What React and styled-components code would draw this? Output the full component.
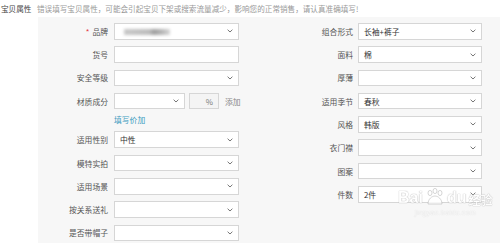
import React from "react";
import styled, { createGlobalStyle } from "styled-components";

const Global = createGlobalStyle`
  html, body {
    margin: 0;
    padding: 0;
    background: #fff;
  }
  body {
    font-family: "Noto Sans CJK SC", "Noto Sans", sans-serif;
    color: #555;
  }
`;

const Page = styled.div`
  position: relative;
  width: 500px;
  height: 243px;
  overflow: hidden;
`;

const Header = styled.div`
  display: flex;
  align-items: center;
  height: 17px;
  font-size: 7.6px;
  line-height: 1;
`;

const Title = styled.div`
  width: 37px;
  padding-left: 1px;
  color: #444;
  box-sizing: border-box;
`;

const Hint = styled.div`
  color: #999;
`;

const Panel = styled.div`
  margin-left: 38px;
  height: 226px;
  background: #f7f7f7;
  display: flex;
  padding-top: 6px;
  box-sizing: border-box;
`;

const Column = styled.div`
  display: flex;
  flex-direction: column;
  width: ${({ w }) => w}px;
`;

const Row = styled.div`
  display: flex;
  align-items: center;
  height: 16.5px;
  margin-bottom: 6.8px;
`;

const Label = styled.div`
  width: ${({ w }) => w}px;
  margin-right: ${({ gap }) => gap}px;
  text-align: right;
  font-size: 7.8px;
  color: #555;
  white-space: nowrap;
`;

const Star = styled.span`
  color: #e4393c;
  margin-right: 3px;
`;

const Box = styled.div`
  position: relative;
  display: flex;
  align-items: center;
  width: ${({ w }) => w}px;
  height: 16.5px;
  box-sizing: border-box;
  border: 1px solid #d6d6d6;
  background: ${({ muted }) => (muted ? "#f4f4f4" : "#fff")};
  padding: 0 5px;
  font-size: 7.8px;
  color: #333;
`;

const Value = styled.span`
  flex: 1;
`;

const Blur = styled.span`
  display: inline-block;
  width: 46px;
  height: 6px;
  margin-left: 4px;
  background: linear-gradient(90deg, #c8c8c8 0%, #bdbdbd 55%, #9f9f9f 65%, #bbb 85%, #d8d8d8 100%);
  filter: blur(1.4px);
`;

const Percent = styled.span`
  margin-left: auto;
  color: #777;
`;

const Add = styled.span`
  margin-left: 6px;
  font-size: 7.8px;
  color: #888;
`;

const LinkRow = styled.div`
  height: 13px;
  margin: -2px 0 6.3px 76px;
  font-size: 7.8px;
  color: #3d9bc0;
`;

const Watermark = styled.div`
  position: absolute;
  left: 398px;
  top: 188px;
  display: flex;
  flex-direction: column;
  align-items: center;
  opacity: 0.8;
`;

const Brand = styled.div`
  display: flex;
  align-items: flex-end;
  font-family: "Liberation Sans", Arial, sans-serif;
  font-weight: bold;
  font-size: 16px;
  line-height: 1;
  color: #fff;
  text-shadow: 0 0 1px #aaa, 0 0 1px #aaa;
`;

const Jingyan = styled.span`
  font-family: "Noto Sans CJK SC", sans-serif;
  font-size: 12px;
  margin-left: 2px;
`;

const Url = styled.div`
  font-family: "Liberation Sans", Arial, sans-serif;
  font-size: 7px;
  color: #fff;
  text-shadow: 0 0 1px #bbb;
  margin-top: 3px;
  letter-spacing: 0.3px;
`;

const Chevron = () => (
  <svg width="6" height="4" viewBox="0 0 6 4" style={{ marginLeft: "auto" }}>
    <path d="M0.6 0.7 L3 3 L5.4 0.7" fill="none" stroke="#666" strokeWidth="0.9" />
  </svg>
);

const Paw = () => (
  <svg width="22" height="18" viewBox="0 0 22 18" style={{ margin: "0 1px" }}>
    <g fill="#fff" stroke="#aaa" strokeWidth="0.6">
      <ellipse cx="6" cy="5" rx="2" ry="2.6" />
      <ellipse cx="11" cy="3" rx="2" ry="2.6" />
      <ellipse cx="16" cy="5" rx="2" ry="2.6" />
      <path d="M4 16 C4 11 8 8 11 8 C14 8 18 11 18 16 Z" />
    </g>
  </svg>
);

const Select = ({ w = 125, value, children }) => (
  <Box w={w}>
    <Value>{children || value}</Value>
    <Chevron />
  </Box>
);

const left = [
  { label: "货号", input: true },
  { label: "安全等级" },
];

const leftRest = [
  { label: "适用性别", value: "中性" },
  { label: "模特实拍" },
  { label: "适用场景" },
  { label: "按关系送礼" },
  { label: "是否带帽子" },
];

const right = [
  { label: "组合形式", value: "长袖+裤子" },
  { label: "面料", value: "棉" },
  { label: "厚薄" },
  { label: "适用季节", value: "春秋" },
  { label: "风格", value: "韩版" },
  { label: "衣门襟" },
  { label: "图案" },
  { label: "件数", value: "2件" },
];

export default function App() {
  return (
    <Page>
      <Global />
      <Header>
        <Title>宝贝属性</Title>
        <Hint>错误填写宝贝属性，可能会引起宝贝下架或搜索流量减少，影响您的正常销售，请认真准确填写!</Hint>
      </Header>
      <Panel>
        <Column w={252}>
          <Row>
            <Label w={70} gap={6}>
              <Star>*</Star>品牌
            </Label>
            <Select>
              <Blur />
            </Select>
          </Row>
          {left.map((f) => (
            <Row key={f.label}>
              <Label w={70} gap={6}>{f.label}</Label>
              {f.input ? <Box w={125} /> : <Select value={f.value} />}
            </Row>
          ))}
          <Row>
            <Label w={70} gap={6}>材质成分</Label>
            <Select w={71} />
            <Box w={30} muted style={{ marginLeft: 4 }}>
              <Percent>%</Percent>
            </Box>
            <Add>添加</Add>
          </Row>
          <LinkRow>填写价加</LinkRow>
          {leftRest.map((f) => (
            <Row key={f.label}>
              <Label w={70} gap={6}>{f.label}</Label>
              <Select value={f.value} />
            </Row>
          ))}
        </Column>
        <Column w={210}>
          {right.map((f) => (
            <Row key={f.label}>
              <Label w={63} gap={5}>{f.label}</Label>
              <Select w={124} value={f.value} />
            </Row>
          ))}
        </Column>
      </Panel>
      <Watermark>
        <Brand>
          Bai
          <Paw />
          du<Jingyan>经验</Jingyan>
        </Brand>
        <Url>jingyan.baidu.com</Url>
      </Watermark>
    </Page>
  );
}
